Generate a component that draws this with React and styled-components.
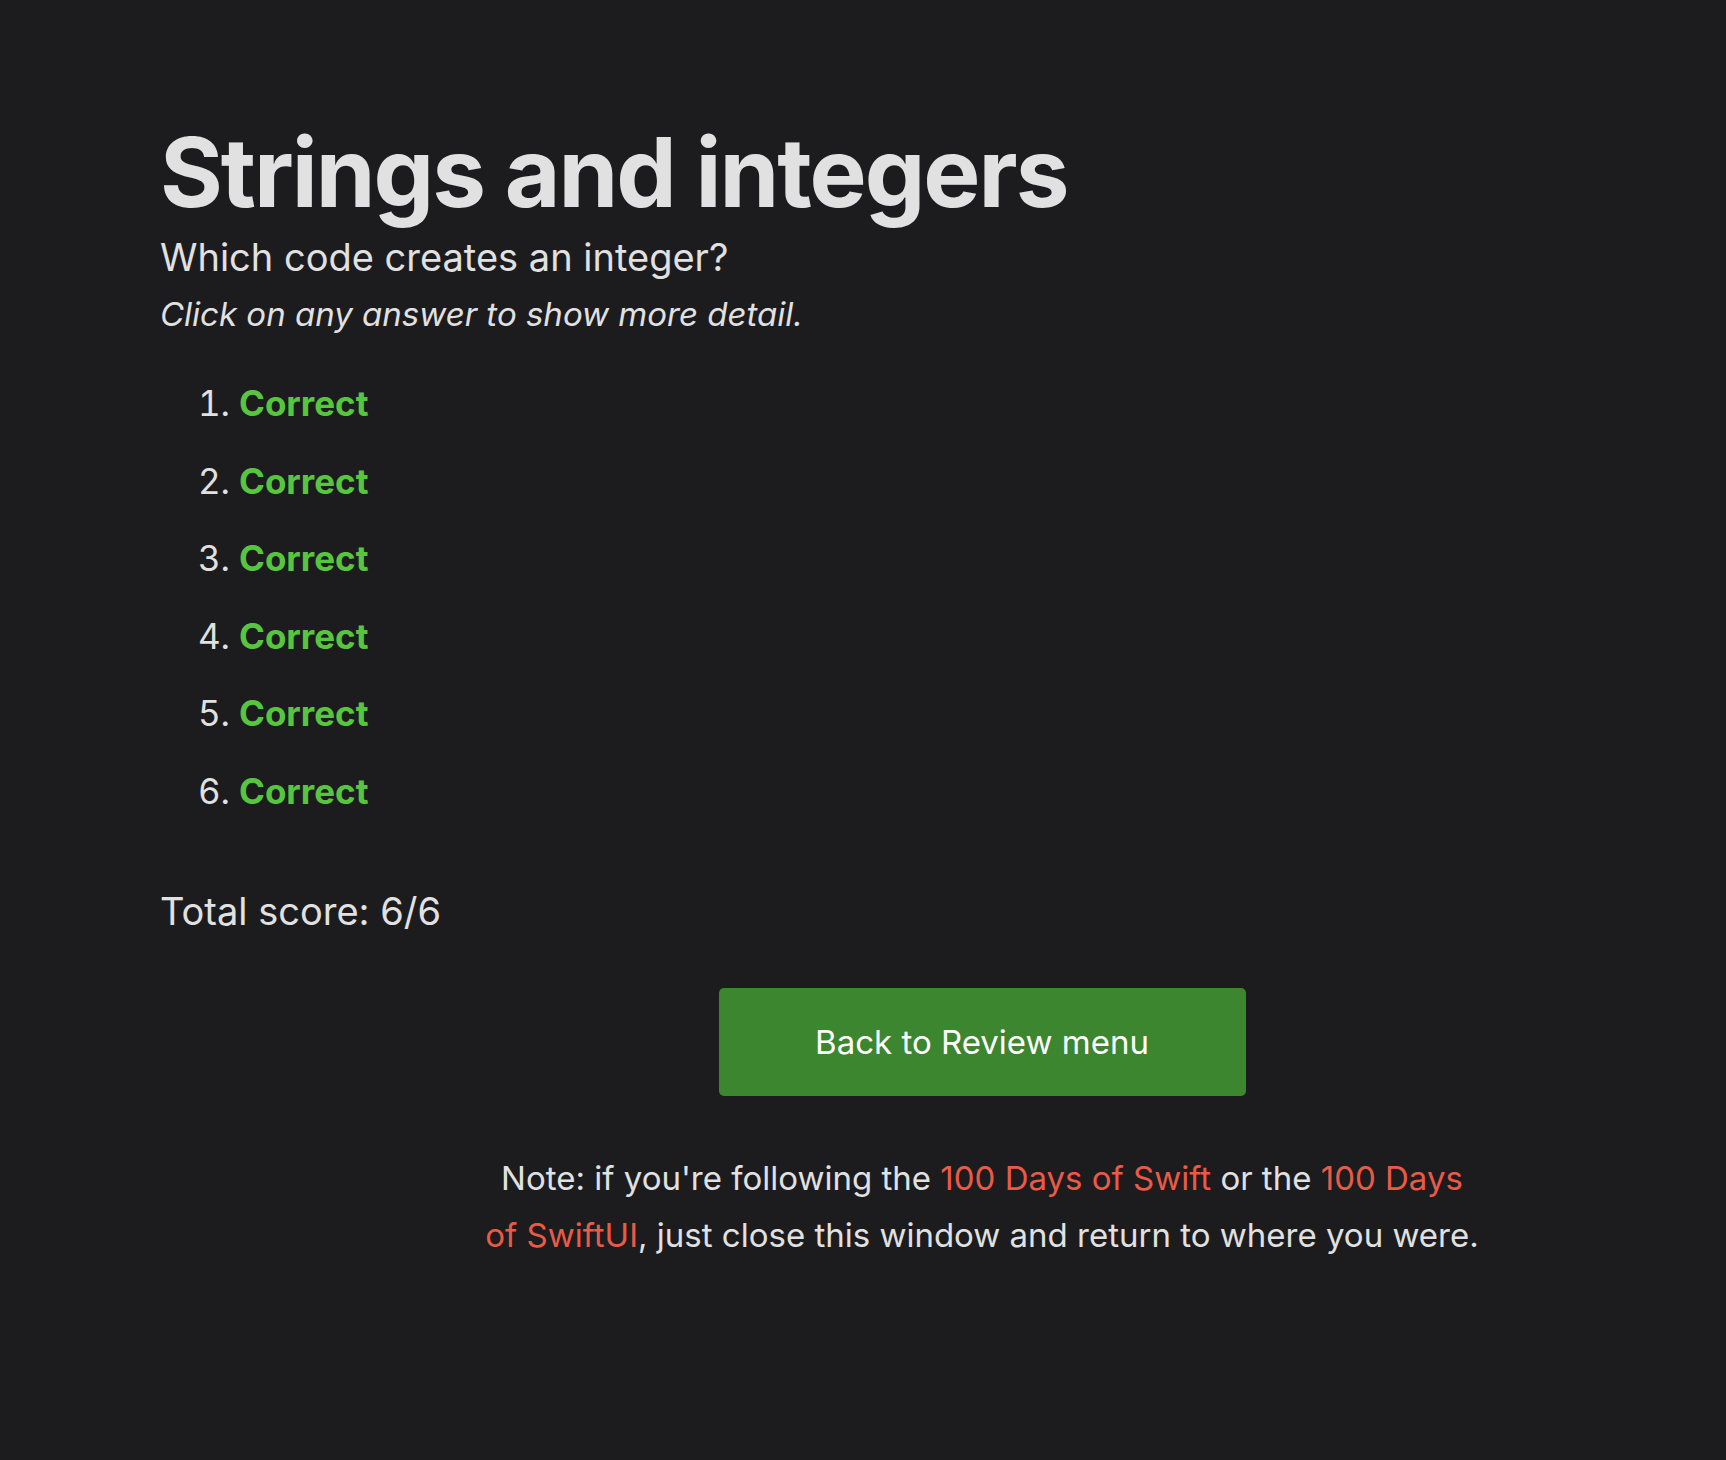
import React from "react";
import styled, { createGlobalStyle } from "styled-components";

const Global = createGlobalStyle`
  html, body { margin: 0; padding: 0; background: #1c1c1e; }
  body {
    font-family: Inter, "Noto Sans", "Liberation Sans", sans-serif;
    color: #e1e1e1;
    min-height: 1460px;
  }
`;

const Page = styled.main`
  padding: 120px 160px 120px 160px;
`;

const Title = styled.h1`
  margin: 0;
  font-size: 96px;
  font-weight: 700;
  line-height: 1.1;
  letter-spacing: -2px;
  color: #e1e1e1;
`;

const Question = styled.h2`
  margin: 7px 0 0 0;
  font-size: 38px;
  font-weight: 400;
  line-height: 1.3;
`;

const Hint = styled.p`
  margin: 8px 0 0 0;
  font-size: 33px;
  font-style: italic;
  line-height: 1.5;
`;

const AnswerList = styled.ol`
  margin: 38px 0 0 0;
  padding: 0;
  list-style: none;
  counter-reset: answer;
  font-size: 35px;
  line-height: 1.5;
`;

const AnswerItem = styled.li`
  counter-increment: answer;
  margin-bottom: 25px;

  &::before {
    content: counter(answer) ".";
    display: inline-block;
    width: 70px;
    margin-right: 9px;
    text-align: right;
    font-variant-numeric: tabular-nums;
  }
`;

const Verdict = styled.span`
  font-weight: 700;
  color: ${(p) => (p.$correct ? "#58c53f" : "#ea5a47")};
  cursor: pointer;
`;

const Score = styled.p`
  margin: 68px 0 0 0;
  font-size: 38px;
  line-height: 1.4;
`;

const Footer = styled.div`
  width: 1040px;
  margin: 49px 0 0 302px;
  display: flex;
  flex-direction: column;
  align-items: center;
`;

const BackButton = styled.button`
  width: 527px;
  height: 108px;
  border: none;
  border-radius: 5px;
  background: #3b862f;
  color: #ffffff;
  font-family: inherit;
  font-size: 33px;
  cursor: pointer;
`;

const Note = styled.p`
  width: 1000px;
  margin: 54px 0 0 0;
  text-align: center;
  font-size: 33px;
  line-height: 57px;
`;

const Link = styled.a`
  color: #ea5a47;
  text-decoration: none;
`;

export default function App() {
  const answers = [true, true, true, true, true, true];
  return (
    <>
      <Global />
      <Page>
        <Title>Strings and integers</Title>
        <Question>Which code creates an integer?</Question>
        <Hint>Click on any answer to show more detail.</Hint>
        <AnswerList>
          {answers.map((c, i) => (
            <AnswerItem key={i}>
              <Verdict $correct={c}>{c ? "Correct" : "Wrong"}</Verdict>
            </AnswerItem>
          ))}
        </AnswerList>
        <Score>Total score: 6/6</Score>
        <Footer>
          <BackButton>Back to Review menu</BackButton>
          <Note>
            Note: if you're following the <Link href="#">100 Days of Swift</Link> or the{" "}
            <Link href="#">100 Days of SwiftUI</Link>, just close this window and return to where you were.
          </Note>
        </Footer>
      </Page>
    </>
  );
}
